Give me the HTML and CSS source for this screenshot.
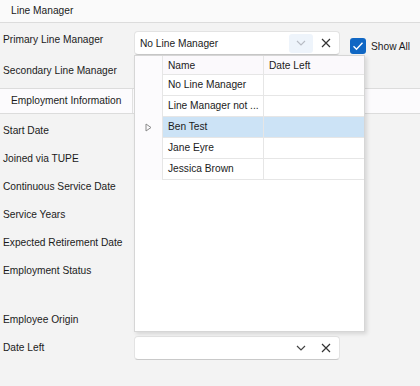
FILE: index.html
```html
<!DOCTYPE html>
<html lang="en">
<head>
    <meta charset="UTF-8">
    <title>Line Manager</title>
    <link rel="stylesheet" href="styles.css">
</head>
<body>
    <div class="title">Line Manager</div>

    <div class="row row-primary">
        <span class="label">Primary Line Manager</span>
        <div class="combo">
            <span class="combo-text">No Line Manager</span>
            <span class="drop-btn active">
                <svg width="10" height="6" viewBox="0 0 10 6"><path d="M1 1l4 4 4-4" fill="none" stroke="#b8bcc4" stroke-width="1.1"/></svg>
            </span>
            <span class="clear-btn">
                <svg width="10" height="10" viewBox="0 0 10 10"><path d="M1 1l8 8M9 1l-8 8" fill="none" stroke="#333" stroke-width="1.2"/></svg>
            </span>
        </div>
        <label class="check">
            <span class="box">
                <svg width="12" height="10" viewBox="0 0 12 10"><path d="M1.5 5.2l3 3 6-6.4" fill="none" stroke="#fff" stroke-width="1.4"/></svg>
            </span>
            Show All
        </label>
    </div>

    <div class="row row-secondary">
        <span class="label">Secondary Line Manager</span>
        <div class="combo"></div>
    </div>

    <div class="tabbar">
        <span class="tab">Employment Information</span>
    </div>

    <div class="fields">
        <div class="field">Start Date</div>
        <div class="field">Joined via TUPE</div>
        <div class="field">Continuous Service Date</div>
        <div class="field">Service Years</div>
        <div class="field">Expected Retirement Date</div>
        <div class="field field-tall">Employment Status</div>
        <div class="field">Employee Origin</div>
        <div class="field">
            <span class="label">Date Left</span>
            <div class="combo combo-small">
                <span class="combo-text"></span>
                <span class="drop-btn">
                    <svg width="10" height="6" viewBox="0 0 10 6"><path d="M1 1l4 4 4-4" fill="none" stroke="#444" stroke-width="1.2"/></svg>
                </span>
                <span class="clear-btn">
                    <svg width="10" height="10" viewBox="0 0 10 10"><path d="M1 1l8 8M9 1l-8 8" fill="none" stroke="#333" stroke-width="1.2"/></svg>
                </span>
            </div>
        </div>
    </div>

    <!-- lookup dropdown, open over the form -->
    <div class="popup">
        <div class="grid-row grid-head">
            <span class="ind"></span>
            <span class="cell name">Name</span>
            <span class="cell date">Date Left</span>
        </div>
        <div class="grid-row">
            <span class="ind"></span>
            <span class="cell name">No Line Manager</span>
            <span class="cell date"></span>
        </div>
        <div class="grid-row">
            <span class="ind"></span>
            <span class="cell name">Line Manager not ...</span>
            <span class="cell date"></span>
        </div>
        <div class="grid-row selected">
            <span class="ind">
                <svg width="7" height="9" viewBox="0 0 7 9"><path d="M1 1l5 3.5L1 8z" fill="none" stroke="#8a8a8a" stroke-width="1"/></svg>
            </span>
            <span class="cell name">Ben Test</span>
            <span class="cell date"></span>
        </div>
        <div class="grid-row">
            <span class="ind"></span>
            <span class="cell name">Jane Eyre</span>
            <span class="cell date"></span>
        </div>
        <div class="grid-row">
            <span class="ind"></span>
            <span class="cell name">Jessica Brown</span>
            <span class="cell date"></span>
        </div>
    </div>
</body>
</html>
```

FILE: styles.css
```css
body {
    margin: 0;
    background: #f3f3f3;
    color: #1b1b1b;
    font-family: 'Liberation Sans', Arial, sans-serif;
    font-size: 10.2px;
    position: relative;
    height: 386px;
    overflow: hidden;
}

.title {
    height: 22px;
    line-height: 21px;
    padding-left: 11px;
    background: #fafafa;
    border-bottom: 1px solid #dcdcdc;
}

.row {
    display: flex;
    align-items: flex-start;
}

.row-primary {
    height: 34px;
}

.row-secondary {
    height: 31px;
}

.label {
    width: 131px;
    padding-left: 3px;
    flex-shrink: 0;
}

.row-primary .label {
    padding-top: 11px;
}

.row-secondary .label {
    padding-top: 8px;
}

.combo {
    width: 204px;
    height: 22px;
    margin-top: 8px;
    background: #fff;
    border: 1px solid #e3e3e3;
    border-bottom-color: #c9c9c9;
    border-radius: 4px;
    display: flex;
    align-items: center;
}

.combo-text {
    flex: 1;
    padding-left: 5px;
}

.drop-btn {
    width: 24px;
    height: 19px;
    border-radius: 3px;
    display: flex;
    align-items: center;
    justify-content: center;
}

.drop-btn.active {
    background: #eef4fb;
}

.clear-btn {
    width: 26px;
    display: flex;
    align-items: center;
    justify-content: center;
}

.check {
    display: flex;
    align-items: center;
    gap: 5px;
    margin-left: 10px;
    margin-top: 15px;
}

.box {
    width: 16px;
    height: 16px;
    border-radius: 3px;
    background: #1067c4;
    display: flex;
    align-items: center;
    justify-content: center;
}

.tabbar {
    height: 24px;
    background: #fcfbfd;
    border-top: 1px solid #dcdcdc;
    border-bottom: 1px solid #dcdcdc;
    display: flex;
}

.tab {
    line-height: 24px;
    padding: 0 11px;
    border-right: 1px solid #e2e2e2;
}

.fields {
    padding-top: 3px;
}

.field {
    height: 28px;
    line-height: 28px;
    padding-left: 3px;
    display: flex;
    align-items: center;
}

.field .label {
    padding-left: 0;
    width: 131px;
}

.field-tall {
    height: 49px;
    align-items: flex-start;
}

.combo-small {
    margin-top: 0;
    height: 22px;
}

.popup {
    position: absolute;
    left: 134px;
    top: 55px;
    width: 229px;
    height: 275px;
    background: #fff;
    border: 1px solid #d6d6d6;
    box-shadow: 2px 2px 4px rgba(0, 0, 0, 0.12);
}

.grid-row {
    display: flex;
    height: 21px;
    line-height: 20px;
}

.grid-head {
    height: 19px;
    line-height: 19px;
    background: #fbf9fc;
}

.ind {
    width: 27px;
    border-right: 1px solid #e6e6e6;
    background: #fcfbfd;
    display: flex;
    align-items: center;
    justify-content: center;
}

.cell {
    border-bottom: 1px solid #e6e6e6;
    padding-left: 5px;
}

.name {
    width: 95px;
    border-right: 1px solid #e6e6e6;
}

.date {
    flex: 1;
}

.selected .cell {
    background: #cce3f6;
}
```
